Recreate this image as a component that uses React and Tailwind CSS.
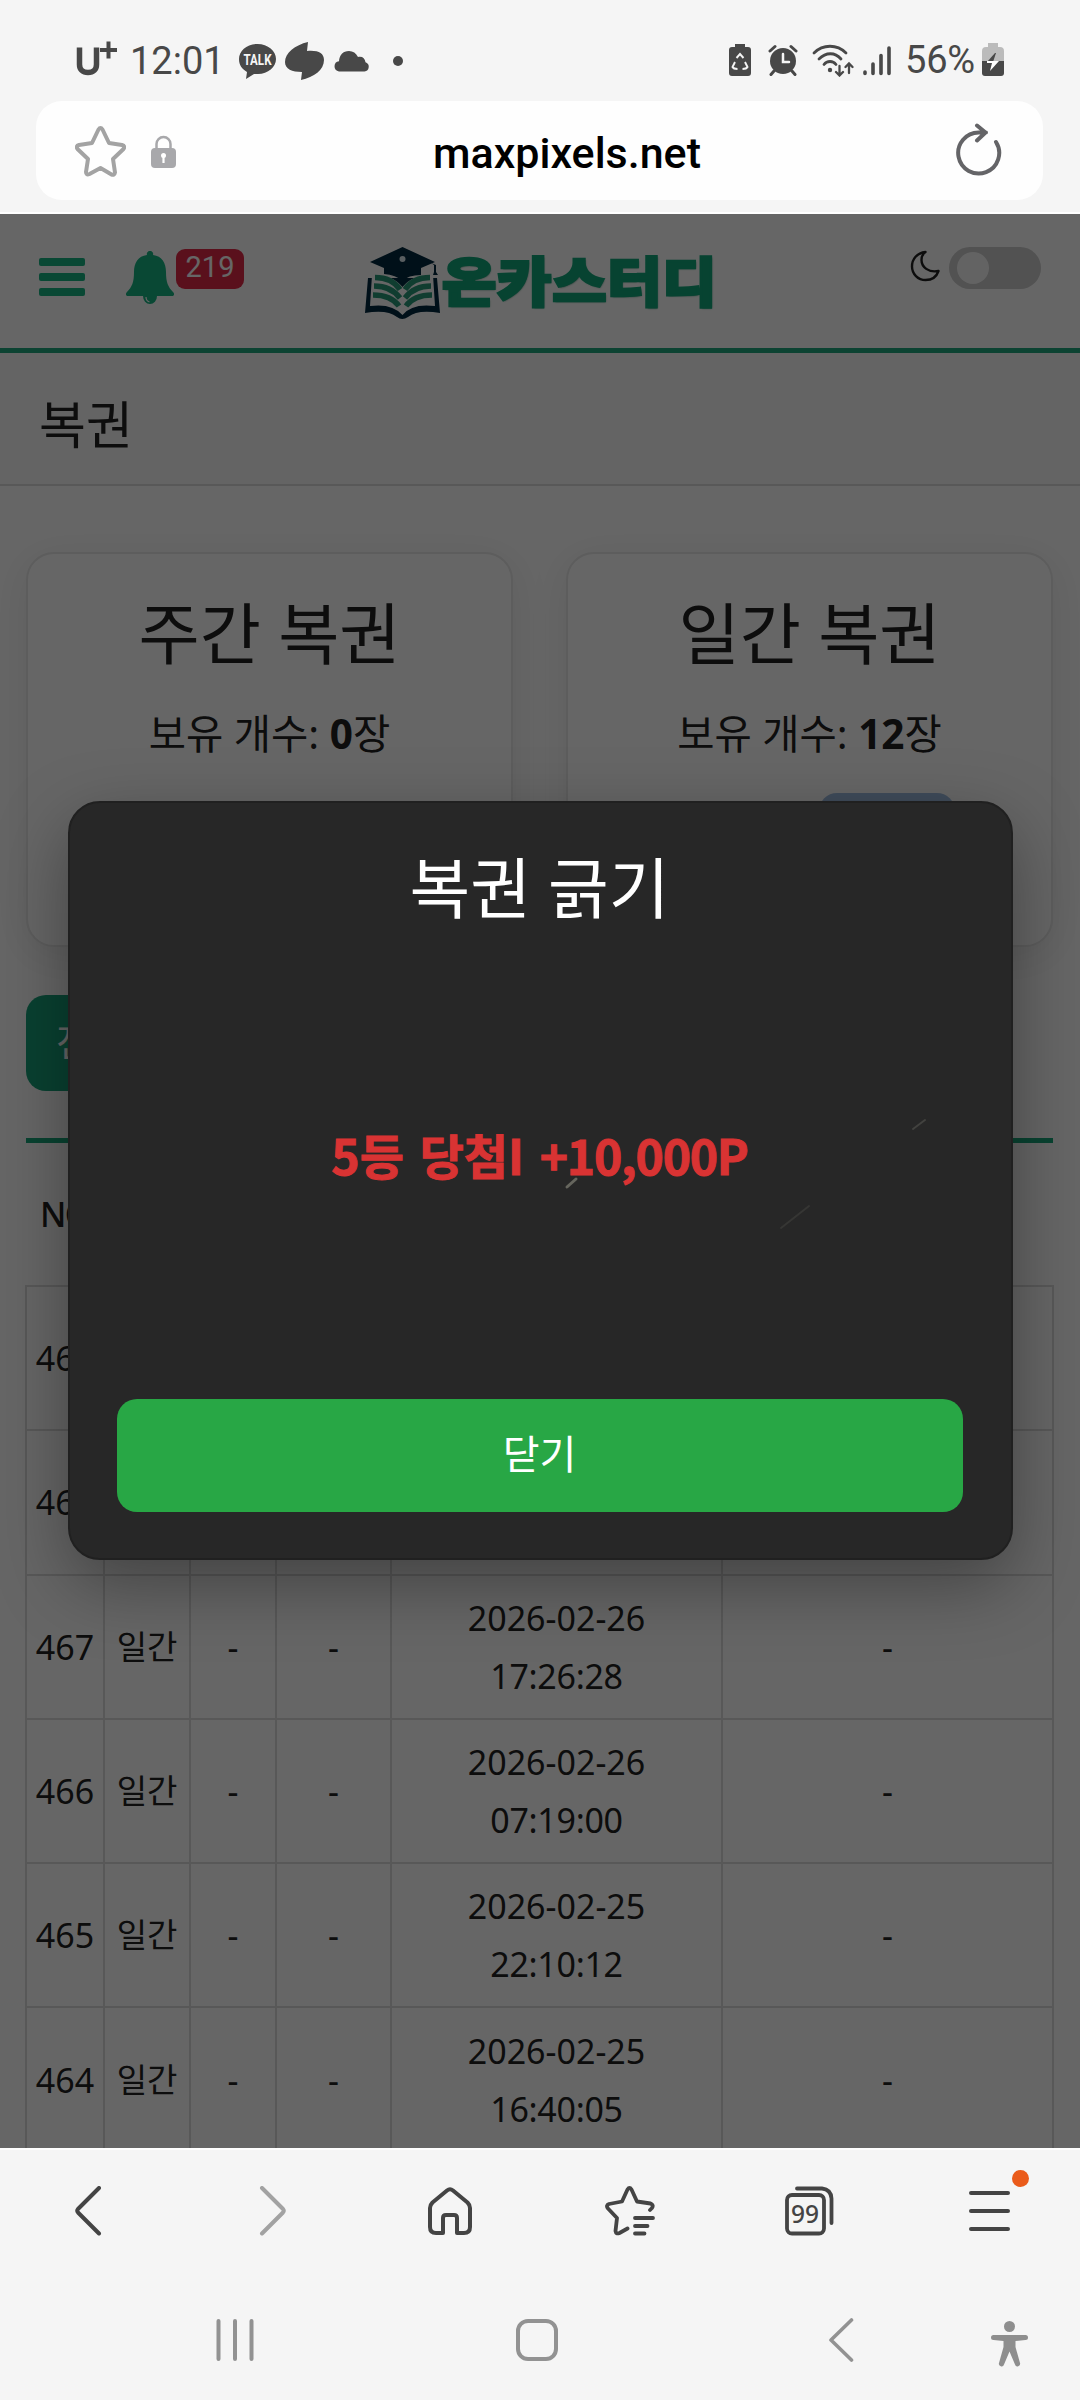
const page = 'font-["Noto_Sans","Noto_Sans_CJK_KR",sans-serif]'

const rows = [
  { no: 469 },
  { no: 468 },
  { no: 467, date: '2026-02-26', time: '17:26:28' },
  { no: 466, date: '2026-02-26', time: '07:19:00' },
  { no: 465, date: '2026-02-25', time: '22:10:12' },
  { no: 464, date: '2026-02-25', time: '16:40:05' },
]

function StatusBar() {
  return (
    <div className="flex h-[101px] items-start justify-between pl-[75px] pr-[75px] pt-[42px] text-[#484848]">
      <div className="flex h-[38px] items-center">
        <svg className="-mt-1.5" width="42" height="36" viewBox="0 0 42 36" fill="none" stroke="currentColor">
          <path d="M4.500 7.500v17c0 5 3 8 8.500 8s8.500-3 8.500-8v-17" strokeWidth="5.500" />
          <path d="M25 10h17M33.500 1.500v17" strokeWidth="4" />
        </svg>
        <span className="ml-[13px] -mt-px w-[92px] font-[Roboto,sans-serif] text-[38px] leading-[38px]">12:01</span>
        <svg className="ml-[17px]" width="37" height="36" viewBox="0 0 37 36">
          <path d="M18.500 1C8 1 0 8 0 16c0 6 3 10 8 13l-1 7 8-5h4c10 0 18-7 18-15S29 1 18.500 1Z" fill="currentColor" />
          <text x="18.500" y="21.500" textAnchor="middle" fill="#f5f5f5" fontSize="14" fontWeight="700" fontFamily="Roboto, sans-serif" textLength="28" lengthAdjust="spacingAndGlyphs">TALK</text>
        </svg>
        <svg className="ml-[9px]" width="39" height="38" viewBox="0 0 39 38" fill="currentColor">
          <path d="M23 0C10 3 0 11 0 20c0 7 7 10 17 10l-1 8c13-3 23-10 23-20 0-7-6-10-17-9Z" />
        </svg>
        <svg className="ml-[10px]" width="35" height="21" viewBox="0 0 35 21" fill="currentColor">
          <path d="M5 20.500h25.500a4.800 4.800 0 0 0 1-9.300C31 7 28 5 24 6 22 2 19 0 15 0 9 0 5.500 4 5 10.200a5.200 5.200 0 0 0 0 10.300Z" />
        </svg>
        <span className="ml-6 size-[10px] rounded-full bg-current" />
      </div>
      <div className="flex h-[36px] items-center">
        <svg width="22" height="33" viewBox="0 0 22 33" fill="none">
          <path d="M6 0h10v3h3a3 3 0 0 1 3 3v23a3 3 0 0 1-3 3H3a3 3 0 0 1-3-3V6a3 3 0 0 1 3-3h3Z" fill="currentColor" />
          <path d="m7.500 14 3.500-4 3.500 4M16 18l2.500 5q-1 2-5 2M8.500 25q-4 0-5-2L6 18" stroke="#f5f5f5" strokeWidth="1.900" />
        </svg>
        <svg className="ml-[17px]" width="30" height="32" viewBox="0 0 30 32" fill="none" stroke="currentColor" strokeLinecap="round">
          <circle cx="15" cy="17" r="13" fill="currentColor" stroke="none" />
          <path d="m2 7 5-4.500M28 7l-5-4.500M6 27l-3 3.500M24 27l3 3.500" strokeWidth="3" />
          <path d="M15 10v8h6" stroke="#f5f5f5" strokeWidth="2.500" />
        </svg>
        <svg className="ml-[14px]" width="42" height="33" viewBox="0 0 42 33" fill="none" stroke="currentColor" strokeWidth="2.800" strokeLinecap="round">
          <path d="M2 9c9-9 23-9 32 0M7 15c7-7 16-7 22 0M12 20.500c3-4 9-4 12 0" />
          <circle cx="18" cy="26" r="2.200" fill="currentColor" stroke="none" />
          <path d="M27.500 22v9M24 28l3.500 3.500L31 28M37 29v-9M33.500 23l3.500-3.500 3.500 3.500" strokeWidth="2.300" />
        </svg>
        <svg className="ml-[9px]" width="28" height="31" viewBox="0 0 28 31" stroke="currentColor" strokeWidth="3.600" strokeLinecap="round">
          <path d="M2 27v1.500M10 19v9.500M18 10.500v18M26 3v25.500" />
        </svg>
        <span className="ml-[14px] w-[74px] whitespace-nowrap font-[Roboto,sans-serif] text-[38px] leading-[38px] tracking-[-0.2px]">56%</span>
        <svg className="ml-[3px] mr-px" width="22" height="34" viewBox="0 0 22 34">
          <path d="M6 0h10v4h2a4 4 0 0 1 4 4v12H0V8a4 4 0 0 1 4-4h2Z" fill="#bbbbbb" />
          <path d="M0 18h22v12a3 3 0 0 1-3 3H3a3 3 0 0 1-3-3Z" fill="currentColor" />
          <path d="m13 10-8 9h6l3-9Z" fill="currentColor" />
          <path d="M10 18h7l-9 10 2-8H5v-2Z" fill="#ffffff" />
        </svg>
      </div>
    </div>
  )
}

function UrlBar() {
  return (
    <div className="ml-9 mr-[37px] flex h-[99px] items-center rounded-[26px] bg-[#fefefe] pl-[39px] pr-[41px]">
      <svg className="mt-[2px]" width="51" height="51" viewBox="0 0 51 51" fill="none" stroke="#a3a3a3" strokeWidth="4" strokeLinejoin="round">
        <path d="M23.500 3.500q2-3 4 0l6.500 13.500 13 2q3.500 1 1.500 4L38 33l2 13.500q-.5 3-3.500 2L25.500 42l-11 6q-3.500 1.500-3.500-2L13 33 2.500 23q-2-3 1.500-4l13-2Z" />
      </svg>
      <svg className="ml-[25px] mt-[2px]" width="25" height="34" viewBox="0 0 25 34" fill="none">
        <path d="M5.500 14V9a7 7 0 0 1 14 0v5" stroke="#a8a8ab" strokeWidth="2.500" />
        <rect y="13" width="25" height="20" rx="4" fill="#a8a8ab" />
        <circle cx="12.500" cy="20.500" r="2.500" fill="#fff" />
        <path d="M12.500 20v8" stroke="#fff" strokeWidth="2.200" />
      </svg>
      <span className="flex-1 pl-[2px] pt-[5px] text-center font-[Roboto,sans-serif] text-[43px] font-medium leading-none text-black">maxpixels.net</span>
      <svg className="-mt-px" width="46" height="54" viewBox="0 0 46 54" fill="none" stroke="#646467" strokeWidth="4" strokeLinecap="round" strokeLinejoin="round">
        <path d="M40 19a20.500 20.500 0 1 1-17-9.500h7M21 2.500l8.500 7-8.500 8" />
      </svg>
    </div>
  )
}

function Logo() {
  return (
    <div className="flex items-center">
      <svg width="75" height="74" viewBox="0 0 75 74">
        <path d="M5 15 37.500 0 70 15 56 21v7q-13 0-18.500 6Q31 28 19 27v-6Z" fill="#00283f" />
        <path d="m66 16 5 2v7l2 3H68l1-3v-7Z" fill="#00283f" />
        <circle cx="37.500" cy="12" r="3" fill="#dcebf2" />
        <path d="M3 31 0 66q22-4 32 4 5 4 11 0 10-8 32-4l-3-35" fill="#00283f" />
        <path d="M7 28q20-1 30.500 12Q48 27 68 28l2 31q-23-3-32.500 9Q27 56 5 59Z" fill="#fff" />
        <g fill="none" stroke="#2a9a79" strokeWidth="5.500">
          <path d="M10 30.500q17 0 25 12M9 39q17 0 26 12M8 48q18 0 26 11" />
          <path d="M65 30.500q-17 0-25 12M66 39q-17 0-26 12M67 48q-18 0-26 11" />
        </g>
      </svg>
      <span className="ml-[2px] w-[273px] -translate-y-1 scale-y-90 whitespace-nowrap font-['Noto_Sans_CJK_KR',sans-serif] text-[59px] font-black leading-[74px] tracking-[0.8px] text-[#12a87b] [-webkit-text-stroke:3px_#12a87b] [text-shadow:1px_1px_2px_#006d4b]">온카스터디</span>
    </div>
  )
}

function SiteHeader() {
  return (
    <header className="flex h-[139px] items-start justify-between border-b-[5px] border-[#20a87d] pl-[39px] pr-[39px] pt-[33px]">
      <div className="flex w-[320px] items-start">
        <div className="mt-[11px] flex w-[46px] flex-col gap-[7px]">
          <span className="h-2 rounded-xs bg-[#17b483]" />
          <span className="h-2 rounded-xs bg-[#17b483]" />
          <span className="h-2 rounded-xs bg-[#17b483]" />
        </div>
        <svg className="ml-[41px] mt-1" width="48" height="54" viewBox="0 0 48 54" fill="#17b483">
          <path d="M24 0a3 3 0 0 1 3 4c9 1 13 8 13 17 0 10 2 15 7 20 2 2 1 4-1 4H2c-2 0-3-2-1-4 5-5 7-10 7-20C8 12 12 5 21 4a3 3 0 0 1 3-4Z" />
          <path d="M17 45h14a7 8 0 0 1-14 0Z" />
          <path d="M20 46q0 4 3.500 5" fill="none" stroke="#fff" strokeWidth="1.200" />
        </svg>
        <span className="ml-[2px] mt-[2px] flex h-10 w-[68px] items-center justify-center rounded-[9px] bg-[#e02a46] pb-[4px] font-[Roboto,sans-serif] text-[29px] leading-none text-white">219</span>
      </div>
      <Logo />
      <div className="flex w-[320px] items-start justify-end">
        <svg className="mr-[9px] mt-[3px]" width="30" height="32" viewBox="0 0 30 32" fill="none" stroke="#202020" strokeWidth="2.400" strokeLinejoin="round">
          <path d="M15.500 2C7 3 2 9 2 16.500A13.500 13.500 0 0 0 15.500 30c6 0 11-3 13-9-10 2-17-4-17-11 0-3 1-6 4-8Z" />
        </svg>
        <div className="flex h-[42px] w-[92px] items-center rounded-full bg-[#cccccc] pl-2">
          <span className="size-8 rounded-full bg-[#f8f8f8]" />
        </div>
      </div>
    </header>
  )
}

function LotteryCard({ title, count, button }) {
  return (
    <div className="flex h-[395px] flex-col items-center rounded-[28px] border-2 border-[#e8e8e8] bg-white pt-[29px] shadow-[0_8px_40px_rgba(0,0,0,0.08)]">
      <h2 className="text-[66.500px] font-normal leading-[100px]">{title}</h2>
      <p className="mt-[18px] text-[40.500px] leading-[66px]">
        보유 개수: <b>{count}</b>장
      </p>
      {button && <div className="ml-[154px] mt-[26px] h-[70px] w-[136px] rounded-[18px] bg-[#9fbce0]" />}
    </div>
  )
}

function HistoryTable() {
  return (
    <table className="w-full table-fixed border-collapse text-center text-[34px] leading-[58px]">
      <colgroup>
        <col className="w-[78px]" />
        <col className="w-[86px]" />
        <col className="w-[86px]" />
        <col className="w-[115px]" />
        <col className="w-[331px]" />
        <col className="w-[331px]" />
      </colgroup>
      <thead>
        <tr className="h-[144px] font-medium">
          <td className="tracking-[-1.5px]">NO</td>
          <td>구분</td>
          <td>등수</td>
          <td>포인트</td>
          <td>일시</td>
          <td>비고</td>
        </tr>
      </thead>
      <tbody>
        {rows.map((row) => (
          <tr key={row.no} className="h-[144.300px]">
            <td className="border-2 border-[#dddddd]">{row.no}</td>
            <td className="border-2 border-[#dddddd] text-[33px]">일간</td>
            <td className="border-2 border-[#dddddd]">-</td>
            <td className="border-2 border-[#dddddd]">-</td>
            <td className="border-2 border-[#dddddd]">
              {row.date}
              <br />
              <span className="tracking-[-0.3px]">{row.time}</span>
            </td>
            <td className="border-2 border-[#dddddd]">-</td>
          </tr>
        ))}
      </tbody>
    </table>
  )
}

function ResultModal() {
  return (
    <div className="absolute inset-0 flex items-start justify-center bg-black/60 pt-[587px]">
      <div className="relative flex h-[759px] w-[945px] flex-col items-center rounded-[32px] border-2 border-[#202020] bg-[#272727] pl-[47px] pr-[48px] pt-[34px] text-white shadow-[0_24px_70px_rgba(0,0,0,0.35)]">
        <h2 className="text-[66px] font-normal leading-[100px]">복권 긁기</h2>
        <p className="mt-[185px] whitespace-nowrap font-['Noto_Sans_CJK_KR',sans-serif] text-[48px] font-bold leading-[64px] text-[#d93333] [word-spacing:5px] [-webkit-text-stroke:1px_#d93333]">
          5등 당첨I <span className="tracking-[-1.2px]">+10,000P</span>
        </p>
        <button className="mt-[213px] h-[113px] w-full rounded-[20px] bg-[#28a745] pb-[3px] text-[40px]">닫기</button>
        <svg className="absolute left-[490px] top-[300px]" width="380" height="140" fill="none" stroke="#42423f" strokeWidth="2" strokeLinecap="round">
          <path d="m7 84 9-8" stroke="#66665e" strokeWidth="3" />
          <path d="M221 125 249 103" stroke="#363634" />
          <path d="m353 26 12-9" />
        </svg>
      </div>
    </div>
  )
}

function BrowserToolbar() {
  return (
    <div className="flex h-[122px] items-center pl-[73px] pr-[60px] text-[#444444]">
      <svg width="30" height="50" viewBox="0 0 30 50" fill="none" stroke="currentColor" strokeWidth="4" strokeLinecap="round" strokeLinejoin="round">
        <path d="M26 2 5 23q-1.500 1.800 0 3.500L26 47.500" />
      </svg>
      <svg className="ml-[155px]" width="30" height="50" viewBox="0 0 30 50" fill="none" stroke="#a2a2a2" strokeWidth="4" strokeLinecap="round" strokeLinejoin="round">
        <path d="m4 2 21 21q1.500 1.800 0 3.500L4 47.500" />
      </svg>
      <svg className="ml-[140px]" width="44" height="48" viewBox="0 0 44 48" fill="none" stroke="currentColor" strokeWidth="4" strokeLinejoin="round">
        <path d="M19 3.500q3-2.500 6 0l14.500 12Q42 18 42 21v19q0 6-6 6h-7V31q0-3-3-3h-8q-3 0-3 3v15H8q-6 0-6-6V21q0-3 2.500-5.500Z" />
      </svg>
      <svg className="ml-[133px]" width="50" height="50" viewBox="0 0 50 50" fill="none" stroke="currentColor" strokeWidth="3.800" strokeLinecap="round" strokeLinejoin="round">
        <path d="m45 24 2-2q2-3-1.500-4.500L32 15.500 26.500 3.500q-2-3-4 0L17 15.500 4 18q-3.500 1.500-1 4.500L12 32l-1.500 13q.5 3.500 4 2l8-4.500" />
        <path d="M30 32h18M30 40h12.500M30 47.500h9.500" />
      </svg>
      <svg className="ml-[130px]" width="50" height="50" viewBox="0 0 50 50" fill="none" stroke="currentColor" strokeWidth="3.800" strokeLinecap="round">
        <rect x="2" y="9" width="37" height="38.500" rx="5" />
        <path d="M12 2.500h25q9 1 9.500 10V37" />
        <text x="20" y="37" textAnchor="middle" fill="currentColor" stroke="none" fontSize="26" fontWeight="500" fontFamily="Noto Sans, sans-serif" textLength="28" lengthAdjust="spacingAndGlyphs">99</text>
      </svg>
      <div className="relative ml-[134px] flex w-[41px] flex-col gap-[14px]">
        <span className="h-1 rounded-full bg-current" />
        <span className="h-1 rounded-full bg-current" />
        <span className="h-1 rounded-full bg-current" />
        <span className="absolute -right-[19px] -top-[21px] size-[17px] rounded-full bg-[#ea5b1a]" />
      </div>
    </div>
  )
}

function NavBar() {
  return (
    <div className="flex h-[128px] items-start pl-[216px] pt-[46px]">
      <svg className="mt-px" width="38" height="42" viewBox="0 0 38 42" stroke="#929292" strokeWidth="4" strokeLinecap="round">
        <path d="M2.500 2v38M19 2v38M35.500 2v38" />
      </svg>
      <div className="ml-[262px] mt-px size-[42px] rounded-[12px] border-4 border-[#929292]" />
      <svg className="ml-[270px]" width="26" height="44" viewBox="0 0 26 44" fill="none" stroke="#929292" strokeWidth="3.600" strokeLinecap="round" strokeLinejoin="round">
        <path d="M23.500 2 3 22l20.500 20" />
      </svg>
      <svg className="ml-[137px] mt-[3px]" width="37" height="46" viewBox="0 0 37 46" fill="#8e8e8e">
        <circle cx="18.500" cy="5.500" r="5.500" />
        <path d="M2.500 14h32a2.500 2.500 0 0 1 0 5l-10 1v6l4.500 16a2.600 2.600 0 0 1-5 1.500l-5.500-13-5.500 13a2.600 2.600 0 0 1-5-1.500L12.500 26v-6l-10-1a2.500 2.500 0 0 1 0-5Z" />
      </svg>
    </div>
  )
}

export default function App() {
  return (
    <div className={`flex h-[2400px] w-[1080px] flex-col overflow-hidden bg-[#f5f5f5] ${page}`}>
      <StatusBar />
      <UrlBar />
      <div className="mt-3 h-0.5 bg-white" />
      <div className="relative h-[1934px] shrink-0 overflow-hidden bg-white text-[#222222]">
        <SiteHeader />
        <h1 className="h-[133px] border-b-2 border-[#dddddd] bg-[#fafafa] pl-[39px] text-[51px] font-normal leading-[142px]">복권</h1>
        <div className="grid grid-cols-2 gap-[53px] pl-[26px] pr-[27px] pt-[66px]">
          <LotteryCard title="주간 복권" count={0} />
          <LotteryCard title="일간 복권" count={12} button />
        </div>
        <div className="ml-[26px] mr-[27px] mt-[48px] flex h-[148px] border-b-[5px] border-[#17a87b]">
          <span className="flex h-24 w-[130px] items-center justify-center rounded-[20px] bg-[#17a37b] pb-1 text-[38px] text-white">전체</span>
        </div>
        <div className="-mt-px pl-[25px] pr-[27px]">
          <HistoryTable />
        </div>
        <ResultModal />
      </div>
      <div className="h-0.5 shrink-0 bg-white" />
      <BrowserToolbar />
      <NavBar />
    </div>
  )
}
